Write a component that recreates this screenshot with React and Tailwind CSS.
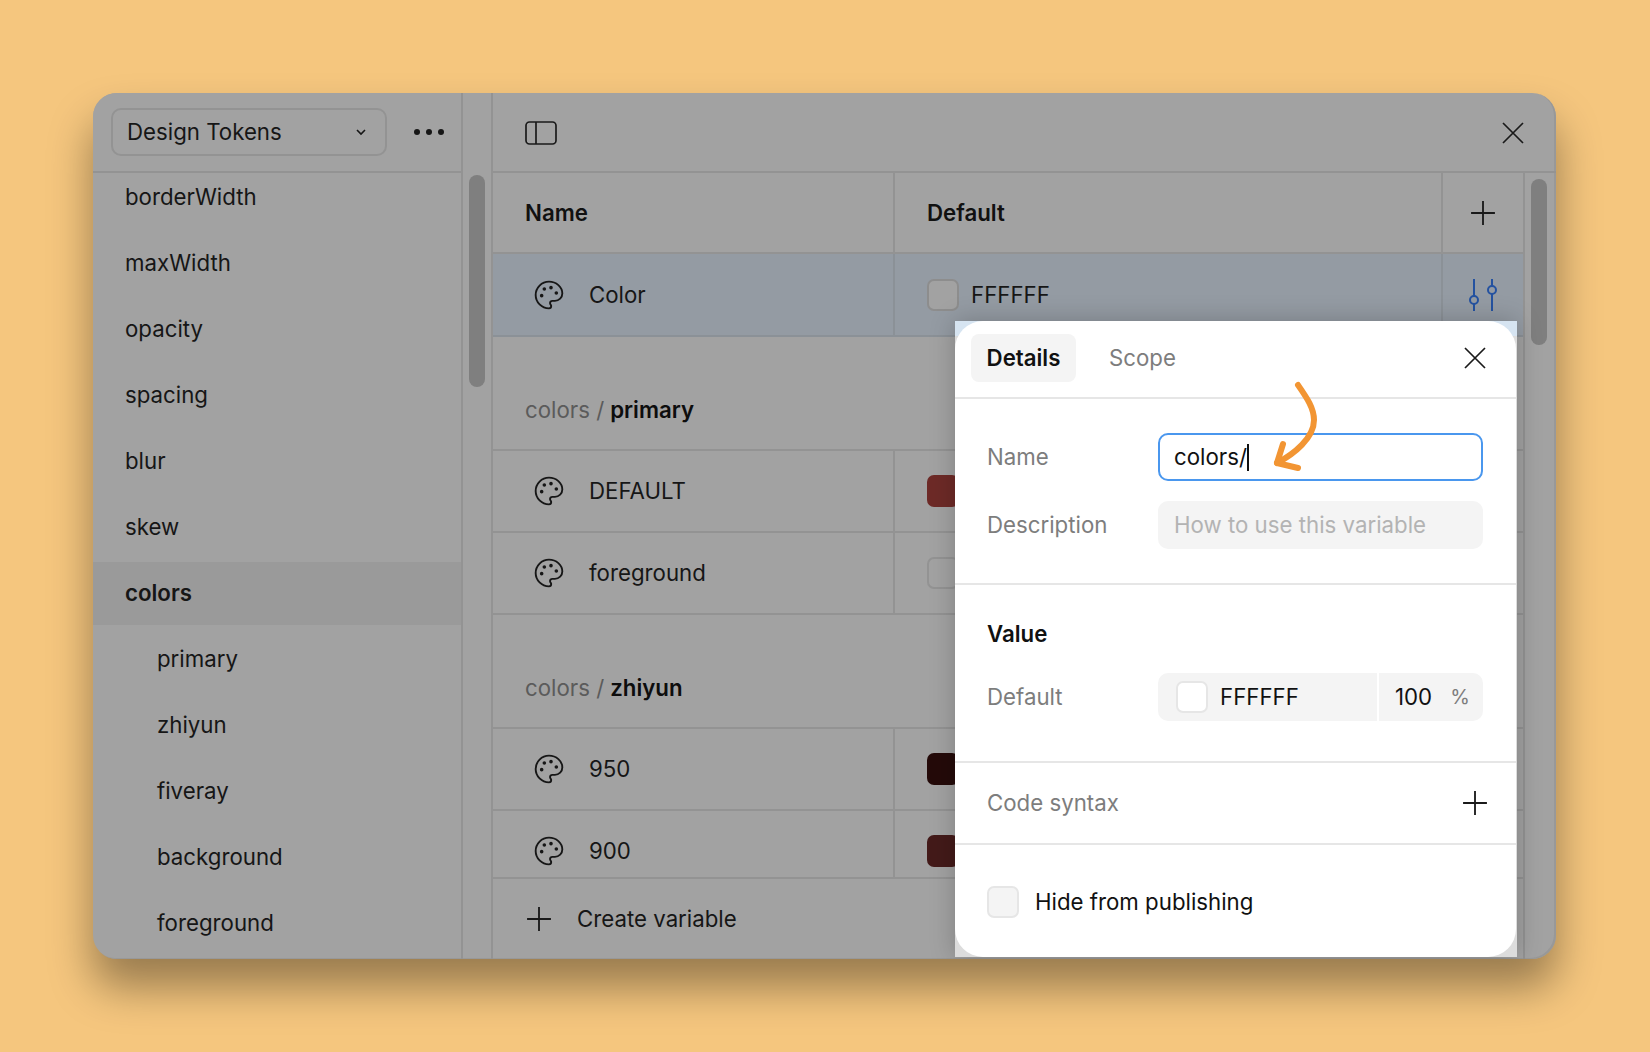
import React from "react";

const font = { fontFamily: "Inter, 'Liberation Sans', sans-serif" };

function Palette() {
  return (
    <svg width="32" height="32" viewBox="0 0 24 24" fill="none" stroke="#161616" strokeWidth="1.4" strokeLinecap="round" strokeLinejoin="round" className="shrink-0">
      <path d="M12 2C6.5 2 2 6.5 2 12s4.5 10 10 10c.926 0 1.648-.746 1.648-1.688 0-.437-.18-.835-.437-1.125-.29-.289-.438-.652-.438-1.125a1.64 1.64 0 0 1 1.668-1.668h1.996c3.051 0 5.555-2.503 5.555-5.554C21.965 6.012 17.461 2 12 2z" />
      <circle cx="13.5" cy="6.5" r="1.35" fill="#161616" stroke="none" />
      <circle cx="17.5" cy="10.5" r="1.35" fill="#161616" stroke="none" />
      <circle cx="8.5" cy="7.5" r="1.35" fill="#161616" stroke="none" />
      <circle cx="6.5" cy="12.5" r="1.35" fill="#161616" stroke="none" />
    </svg>
  );
}

function Plus({ size = 26, color = "#1a1a1a" }) {
  return (
    <svg width={size} height={size} viewBox="0 0 24 24" fill="none" stroke={color} strokeWidth="1.7" className="shrink-0">
      <path d="M12 1v22M1 12h22" />
    </svg>
  );
}

function Close() {
  return (
    <svg width="24" height="24" viewBox="0 0 24 24" fill="none" stroke="#1a1a1a" strokeWidth="1.7" className="shrink-0">
      <path d="M2 2l20 20M22 2L2 22" />
    </svg>
  );
}

function Row({ name, swatch, border }) {
  return (
    <div className="flex h-[82px] shrink-0 border-b-2 border-[#939393]">
      <div className="flex w-[402px] shrink-0 items-center gap-[24px] border-r-2 border-[#939393] pl-[40px]">
        <Palette />
        <span className="text-[22.25px] text-[#161616]">{name}</span>
      </div>
      <div className="flex flex-1 items-center pl-[32px]">
        <div className={`h-[32px] w-[32px] rounded-[7px] ${swatch} ${border ? "border-2 border-[#939393]" : ""}`} />
      </div>
    </div>
  );
}

function Section({ group }) {
  return (
    <div className="flex h-[114px] shrink-0 items-end border-b-2 border-[#939393] pb-[24px] pl-[32px] text-[22.25px] leading-[30px]">
      <span className="text-[#5b5b5b]">colors / </span>
      <span className="ml-[6px] font-semibold text-[#0d0d0d]">{group}</span>
    </div>
  );
}

const sideItems = ["borderWidth", "maxWidth", "opacity", "spacing", "blur", "skew"];
const subItems = ["primary", "zhiyun", "fiveray", "background", "foreground"];

export default function App() {
  return (
    <div className="h-[1052px] w-[1650px] overflow-hidden bg-[#f5c67e] pl-[93px] pt-[93px]" style={font}>
      <div className="relative flex h-[866px] w-[1463px] overflow-hidden rounded-[24px] bg-[#a2a2a2] shadow-[0_28px_44px_rgba(0,0,0,0.38),inset_-2px_-1px_0_#989898]">
        {/* sidebar */}
        <aside className="flex w-[370px] shrink-0 flex-col border-r-2 border-[#939393]">
          <div className="z-10 flex h-[80px] shrink-0 items-center border-b-2 border-[#939393] bg-[#a2a2a2] pl-[18px]">
            <div className="flex h-[48px] w-[276px] items-center justify-between rounded-[10px] border-2 border-[#939393] pl-[14px] pr-[17px]">
              <span className="text-[22.25px] text-[#161616]">Design Tokens</span>
              <svg width="14" height="14" viewBox="0 0 14 14" fill="none" stroke="#161616" strokeWidth="1.6"><path d="M3 5l4 4 4-4" /></svg>
            </div>
            <div className="ml-[27px] flex gap-[6px]">
              <span className="h-[6px] w-[6px] rounded-full bg-[#161616]" />
              <span className="h-[6px] w-[6px] rounded-full bg-[#161616]" />
              <span className="h-[6px] w-[6px] rounded-full bg-[#161616]" />
            </div>
          </div>
          <div className="-mt-[9px] flex flex-col text-[22.25px] text-[#161616]">
            {sideItems.map((t) => (
              <div key={t} className="flex h-[66px] shrink-0 items-center pl-[32px]">{t}</div>
            ))}
            <div className="my-[1.5px] flex h-[63px] shrink-0 items-center bg-[#9a9a9a] pl-[32px] font-semibold">colors</div>
            {subItems.map((t) => (
              <div key={t} className="flex h-[66px] shrink-0 items-center pl-[64px]">{t}</div>
            ))}
          </div>
        </aside>
        {/* sidebar scroll gutter */}
        <div className="w-[30px] shrink-0 border-r-2 border-[#939393] pl-[6px] pt-[82px]">
          <div className="h-[212px] w-[16px] rounded-full bg-[#7f7f7f]" />
        </div>
        {/* main */}
        <main className="flex min-w-0 flex-1 flex-col">
          <div className="flex h-[80px] shrink-0 items-center justify-between border-b-2 border-[#939393] pl-[32px] pr-[31px] pt-[2px]">
            <svg width="32" height="24" viewBox="0 0 32 24" fill="none" stroke="#1a1a1a" strokeWidth="1.7">
              <rect x="1" y="1" width="30" height="22" rx="3.5" />
              <path d="M11 1v22" />
            </svg>
            <Close />
          </div>
          <div className="flex min-h-0 flex-1">
            <div className="flex w-[1032px] shrink-0 flex-col border-r-2 border-[#939393]">
              <div className="flex h-[81px] shrink-0 border-b-2 border-[#939393]">
                <div className="flex w-[402px] shrink-0 items-center border-r-2 border-[#939393] pl-[32px] text-[22.25px] font-semibold text-[#111]">Name</div>
                <div className="flex flex-1 items-center pl-[32px] text-[22.25px] font-semibold text-[#111]">Default</div>
                <div className="flex w-[82px] shrink-0 items-center justify-center border-l-2 border-[#939393]"><Plus /></div>
              </div>
              <div className="flex h-[83px] shrink-0 border-b-2 border-[#8b9197] bg-[#949ba3]">
                <div className="flex w-[402px] shrink-0 items-center gap-[24px] border-r-2 border-[#8b9197] pl-[40px]">
                  <Palette />
                  <span className="text-[22.25px] text-[#161616]">Color</span>
                </div>
                <div className="flex flex-1 items-center gap-[12px] pl-[32px]">
                  <div className="h-[32px] w-[32px] rounded-[7px] border-2 border-[#8d8d8d] bg-[#a2a2a2]" />
                  <span className="text-[22.25px] text-[#161616]">FFFFFF</span>
                </div>
                <div className="flex w-[82px] shrink-0 items-center justify-center border-l-2 border-[#8b9197]">
                  <svg width="30" height="34" viewBox="0 0 30 34" fill="none" stroke="#2452a0" strokeWidth="2">
                    <path d="M6 1v17M6 26v7M24 1v7M24 16v17" />
                    <circle cx="6" cy="22" r="4" />
                    <circle cx="24" cy="12" r="4" />
                  </svg>
                </div>
              </div>
              <Section group="primary" />
              <Row name="DEFAULT" swatch="bg-[#6d2a27]" />
              <Row name="foreground" swatch="bg-[#a2a2a2]" border />
              <Section group="zhiyun" />
              <Row name="950" swatch="bg-[#240a09]" />
              <div className="flex h-[68px] shrink-0 overflow-hidden border-b-2 border-[#939393]">
                <div className="flex h-[80px] w-[402px] shrink-0 items-center gap-[24px] border-r-2 border-[#939393] pl-[40px]">
                  <Palette />
                  <span className="text-[22.25px] text-[#161616]">900</span>
                </div>
                <div className="flex h-[80px] flex-1 items-center pl-[32px]">
                  <div className="h-[32px] w-[32px] rounded-[7px] bg-[#431a19]" />
                </div>
              </div>
              <div className="flex flex-1 items-center gap-[25px] pl-[33px]">
                <Plus />
                <span className="text-[22.25px] text-[#161616]">Create variable</span>
              </div>
            </div>
            <div className="w-[31px] shrink-0 pl-[6px] pt-[6px]">
              <div className="h-[166px] w-[16px] rounded-full bg-[#7f7f7f]" />
            </div>
          </div>
        </main>

        {/* details popover */}
        <div className="absolute left-[862px] top-[228px] h-[636px] w-[562px] bg-[linear-gradient(#d6e4f1_0,#d6e4f1_15px,#dcdcdc_15px)] shadow-[0_0_24px_rgba(0,0,0,0.22)]">
          <div className="flex h-full w-[561px] flex-col rounded-[28px] bg-white">
            <div className="flex h-[78px] shrink-0 items-start border-b-2 border-[#e6e6e6] pl-[16px] pr-[29px] pt-[13px]">
              <div className="flex h-[48px] w-[105px] items-center justify-center rounded-[8px] bg-[#f4f4f4] text-[22.25px] font-semibold text-[#111]">Details</div>
              <span className="ml-[33px] flex h-[48px] items-center text-[22.25px] text-[#7d7d7d]">Scope</span>
              <div className="ml-auto flex h-[48px] items-center"><Close /></div>
            </div>
            <div className="flex h-[186px] shrink-0 flex-col border-b-2 border-[#e6e6e6] pl-[32px] pr-[33px] pt-[34px]">
              <div className="flex items-center">
                <span className="w-[171px] text-[22.25px] text-[#7d7d7d]">Name</span>
                <div className="flex h-[48px] flex-1 items-center rounded-[10px] border-2 border-[#4a97ee] pl-[14px] text-[22.25px] text-[#111]">
                  colors/<span className="h-[27px] w-[2px] bg-[#111]" />
                </div>
              </div>
              <div className="mt-[20px] flex items-center">
                <span className="w-[171px] text-[22.25px] text-[#7d7d7d]">Description</span>
                <div className="flex h-[48px] flex-1 items-center rounded-[10px] bg-[#f4f4f4] pl-[16px] text-[22.25px] text-[#b3b3b3]">How to use this variable</div>
              </div>
            </div>
            <div className="flex h-[178px] shrink-0 flex-col border-b-2 border-[#e6e6e6] pl-[32px] pr-[33px] pt-[34px]">
              <span className="text-[22.25px] font-semibold leading-[30px] text-[#111]">Value</span>
              <div className="mt-[24px] flex items-center">
                <span className="w-[171px] text-[22.25px] text-[#7d7d7d]">Default</span>
                <div className="flex h-[48px] flex-1 overflow-hidden rounded-[10px] text-[22.25px] text-[#111]">
                  <div className="flex w-[219px] items-center gap-[12px] bg-[#f4f4f4] pl-[18px]">
                    <div className="h-[32px] w-[32px] rounded-[7px] border-2 border-[#e6e6e6] bg-white" />
                    <span>FFFFFF</span>
                  </div>
                  <div className="ml-[2px] flex flex-1 items-center justify-between bg-[#f4f4f4] pl-[16px] pr-[13px]">
                    <span>100</span>
                    <span className="text-[20px] text-[#7d7d7d]">%</span>
                  </div>
                </div>
              </div>
            </div>
            <div className="flex h-[82px] shrink-0 items-center justify-between border-b-2 border-[#e6e6e6] pl-[32px] pr-[28px]">
              <span className="text-[22.25px] text-[#7d7d7d]">Code syntax</span>
              <Plus />
            </div>
            <div className="flex flex-1 items-center gap-[16px] pl-[32px] pt-[2px]">
              <div className="h-[32px] w-[32px] rounded-[7px] border-2 border-[#e6e6e6] bg-[#f4f4f4]" />
              <span className="text-[22.25px] text-[#111]">Hide from publishing</span>
            </div>
          </div>
        </div>

        {/* annotation arrow */}
        <svg className="absolute left-[1177px] top-[285px]" width="50" height="100" viewBox="0 0 50 100" fill="none" stroke="#f29533" strokeWidth="6" strokeLinecap="round" strokeLinejoin="round">
          <path d="M28 7C37 20 44 30 44 42C44 60 24 76 7 85" />
          <path d="M13 66L7 85L28 90" />
        </svg>
      </div>
    </div>
  );
}
